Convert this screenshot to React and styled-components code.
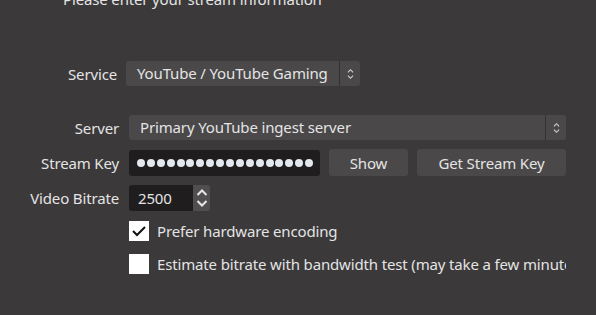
import React from "react"
import styled, { createGlobalStyle } from "styled-components"

const Global = createGlobalStyle`
  html, body {
    margin: 0;
    padding: 0;
    background: #3b393a;
  }
  body {
    font-family: "Noto Sans", "Open Sans", sans-serif;
    font-size: 15px;
    letter-spacing: -0.15px;
    color: #e4e4e4;
    overflow: hidden;
  }
`

const Page = styled.div`
  width: 596px;
  height: 315px;
  overflow: hidden;
  background: #3b393a;
`

const Intro = styled.div`
  margin-top: -12px;
  padding-left: 63px;
  height: 22px;
  line-height: 22px;
  white-space: nowrap;
`

const Form = styled.div`
  display: grid;
  grid-template-columns: ${(p) => p.$label}px ${(p) => p.$field}px;
  column-gap: ${(p) => p.$gap}px;
  row-gap: ${(p) => p.$rowGap || 9}px;
  margin-top: ${(p) => p.$top}px;
  align-items: center;
`

const Label = styled.div`
  text-align: right;
  white-space: nowrap;
  line-height: 20px;
`

const Combo = styled.div`
  display: flex;
  align-items: stretch;
  width: ${(p) => p.$width}px;
  height: 25px;
  background: #4a4849;
  border-radius: 3px;
  box-sizing: border-box;
`

const ComboText = styled.div`
  flex: 1;
  padding-left: 11px;
  line-height: 25px;
  white-space: nowrap;
  overflow: hidden;
`

const ComboArrow = styled.div`
  width: 20px;
  border-left: 1px solid #333132;
  display: flex;
  align-items: center;
  justify-content: center;
`

const Row = styled.div`
  display: flex;
  align-items: center;
  gap: 9px;
`

const KeyField = styled.div`
  width: 191px;
  height: 26px;
  background: #1f1d1e;
  border-radius: 3px;
  display: flex;
  align-items: center;
  gap: 1.9px;
  padding-left: 8px;
  box-sizing: border-box;
`

const Dot = styled.span`
  width: 8px;
  height: 8px;
  border-radius: 50%;
  background: #e3e7ee;
`

const Button = styled.button`
  width: ${(p) => p.$width}px;
  height: 27px;
  background: #4a4849;
  color: #e4e4e4;
  border: none;
  border-radius: 3px;
  font: inherit;
  letter-spacing: inherit;
  padding: 0;
`

const Spin = styled.div`
  display: flex;
  width: 81px;
  height: 26px;
`

const SpinValue = styled.div`
  flex: 1;
  background: #1f1d1e;
  border-radius: 3px 0 0 3px;
  padding-left: 9px;
  line-height: 26px;
`

const SpinButtons = styled.div`
  width: 17px;
  background: #504e4f;
  border-radius: 0 3px 3px 0;
  display: flex;
  align-items: center;
  justify-content: center;
`

const Checks = styled.div`
  display: flex;
  flex-direction: column;
  gap: 13px;
  margin-top: 10px;
  padding-left: 129px;
`

const CheckRow = styled.div`
  display: flex;
  align-items: center;
  gap: 8px;
  white-space: nowrap;
  width: 437px;
  overflow: hidden;
`

const Box = styled.div`
  width: 20px;
  height: 20px;
  background: #ffffff;
  flex: none;
  display: flex;
  align-items: center;
  justify-content: center;
`

const UpDown = ({ w = 8, h = 14, stroke = "#d8d8d8", sw = 1.2 }) => (
  <svg width={w} height={h} viewBox="0 0 8 14" fill="none" stroke={stroke} strokeWidth={sw}>
    <path d="M1 5 L4 2 L7 5" />
    <path d="M1 9 L4 12 L7 9" />
  </svg>
)

const Check = () => (
  <svg width="14" height="12" viewBox="0 0 14 12" fill="none" stroke="#111" strokeWidth="2">
    <path d="M1 6 L5 10 L13 2" />
  </svg>
)

export default function App() {
  return (
    <Page>
      <Global />
      <Intro>Please enter your stream information</Intro>

      <Form $label={117} $field={234} $gap={9} $top={51}>
        <Label>Service</Label>
        <Combo $width={234}>
          <ComboText>YouTube / YouTube Gaming</ComboText>
          <ComboArrow>
            <UpDown w={7} h={12} />
          </ComboArrow>
        </Combo>
      </Form>

      <Form $label={119} $field={437} $gap={10} $top={29}>
        <Label>Server</Label>
        <Combo $width={437}>
          <ComboText>Primary YouTube ingest server</ComboText>
          <ComboArrow>
            <UpDown w={7} h={12} />
          </ComboArrow>
        </Combo>

        <Label>Stream Key</Label>
        <Row>
          <KeyField>
            {Array.from({ length: 18 }).map((_, i) => (
              <Dot key={i} />
            ))}
          </KeyField>
          <Button $width={79}>Show</Button>
          <Button $width={149}>Get Stream Key</Button>
        </Row>

        <Label>Video Bitrate</Label>
        <Spin>
          <SpinValue>2500</SpinValue>
          <SpinButtons>
            <UpDown w={12} h={22} stroke="#e6e6e6" sw={1.4} />
          </SpinButtons>
        </Spin>
      </Form>

      <Checks>
        <CheckRow>
          <Box>
            <Check />
          </Box>
          Prefer hardware encoding
        </CheckRow>
        <CheckRow>
          <Box />
          Estimate bitrate with bandwidth test (may take a few minutes)
        </CheckRow>
      </Checks>
    </Page>
  )
}
